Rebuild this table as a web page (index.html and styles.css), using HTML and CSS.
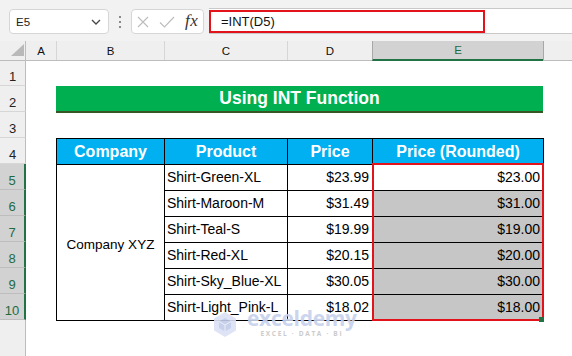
FILE: index.html
```html
<!DOCTYPE html>
<html>
<head>
<meta charset="utf-8">
<link rel="stylesheet" href="styles.css">
</head>
<body>
<div class="app">
  <div class="toolbar">
    <div class="namebox">
      <span class="ref">E5</span>
      <svg class="chev" width="10" height="6" viewBox="0 0 10 6"><path d="M1 1 L5 5 L9 1" fill="none" stroke="#444" stroke-width="1.3"/></svg>
    </div>
    <div class="grip"><i></i><i></i><i></i></div>
    <div class="fnbox">
      <svg class="ico-x" width="12" height="12" viewBox="0 0 12 12"><path d="M1 1 L11 11 M11 1 L1 11" stroke="#bcbcbc" stroke-width="1.1"/></svg>
      <svg class="ico-ok" width="16" height="12" viewBox="0 0 16 12"><path d="M1 6.5 L5.5 11 L15 1" fill="none" stroke="#bcbcbc" stroke-width="1.1"/></svg>
      <span class="fx">fx</span>
    </div>
    <div class="formula"><div class="formula-input">=INT(D5)</div></div>
  </div>

  <div class="sheet">
    <div class="corner"><svg width="26" height="20" viewBox="0 0 26 20"><path d="M24 3 L24 15 L11 15 Z" fill="#b9b9b9"/></svg></div>
    <div class="colheads">
      <div class="ch ch-a">A</div>
      <div class="ch ch-b">B</div>
      <div class="ch ch-c">C</div>
      <div class="ch ch-d">D</div>
      <div class="ch ch-e sel">E</div>
      <div class="ch ch-rest"></div>
    </div>
    <div class="rowheads">
      <div class="rh first">1</div>
      <div class="rh">2</div>
      <div class="rh">3</div>
      <div class="rh">4</div>
      <div class="rh sel">5</div>
      <div class="rh sel">6</div>
      <div class="rh sel">7</div>
      <div class="rh sel">8</div>
      <div class="rh sel">9</div>
      <div class="rh sel">10</div>
      <div class="rh rest"></div>
    </div>
    <div class="body">
      <div class="title">Using INT Function</div>
      <div class="tbl">
        <div class="th">Company</div>
        <div class="th">Product</div>
        <div class="th">Price</div>
        <div class="th">Price (Rounded)</div>
        <div class="td company">Company XYZ</div>
        <div class="td">Shirt-Green-XL</div>
        <div class="td num">$23.99</div>
        <div class="td num active">$23.00</div>
        <div class="td">Shirt-Maroon-M</div>
        <div class="td num">$31.49</div>
        <div class="td num fill">$31.00</div>
        <div class="td">Shirt-Teal-S</div>
        <div class="td num">$19.99</div>
        <div class="td num fill">$19.00</div>
        <div class="td">Shirt-Red-XL</div>
        <div class="td num">$20.15</div>
        <div class="td num fill">$20.00</div>
        <div class="td">Shirt-Sky_Blue-XL</div>
        <div class="td num">$30.05</div>
        <div class="td num fill">$30.00</div>
        <div class="td">Shirt-Light_Pink-L</div>
        <div class="td num">$18.02</div>
        <div class="td num fill">$18.00</div>
      </div>
    </div>
  </div>

  <div class="selection"></div>
  <div class="handle"></div>

  <div class="watermark">
    <svg class="wm-logo" width="24" height="27" viewBox="0 0 24 27">
      <path d="M12 1 L23 7.5 L23 19.5 L12 26 L1 19.5 L1 7.5 Z" fill="#dbe2f4"/>
      <path d="M12 7 L18 10.5 L18 17 L12 20.5 L6 17 L6 10.5 Z" fill="#c3cdea"/>
      <path d="M6 10.5 L12 14 L18 10.5 M12 14 L12 20.5" fill="none" stroke="#e9edf8" stroke-width="1"/>
    </svg>
    <div class="wm-text">
      <span class="wm-name">exceldemy</span>
      <span class="wm-sub">EXCEL · DATA · BI</span>
    </div>
  </div>
</div>
</body>
</html>
```

FILE: styles.css
```css
* { box-sizing: border-box; }

html, body {
  margin: 0;
  padding: 0;
  background: #ffffff;
}

.app {
  position: relative;
  width: 572px;
  height: 356px;
  overflow: hidden;
  font-family: "Liberation Sans", Arial, sans-serif;
  color: #000;
}

/* ---------- toolbar ---------- */
.toolbar {
  height: 41px;
  background: #f2f2f2;
  display: flex;
  align-items: flex-start;
  padding-top: 9px;
  padding-left: 9px;
}

.namebox {
  width: 100px;
  height: 25px;
  background: #fff;
  border: 1px solid #d6d6d6;
  border-radius: 4px;
  display: flex;
  align-items: center;
  justify-content: space-between;
  padding: 0 7px 0 6px;
}

.ref {
  font-size: 11.5px;
  color: #222;
}

.grip {
  width: 22px;
  height: 25px;
  display: flex;
  flex-direction: column;
  align-items: center;
  justify-content: center;
  gap: 3px;
}

.grip i {
  display: block;
  width: 2px;
  height: 2px;
  background: #8a8a8a;
}

.fnbox {
  width: 73px;
  height: 25px;
  background: #fff;
  border: 1px solid #d6d6d6;
  border-radius: 4px;
  display: flex;
  align-items: center;
  padding-left: 5px;
}

.ico-x { margin-right: 10px; }
.ico-ok { margin-right: 10px; }

.fx {
  font-family: "Liberation Serif", "Times New Roman", serif;
  font-style: italic;
  font-size: 17px;
  color: #333;
  letter-spacing: 0.5px;
  line-height: 1;
  margin-top: -2px;
}

.formula {
  flex: 1;
  margin-left: 5px;
  margin-top: -1px;
  height: 26px;
  background: #fff;
  border-top: 1px solid #c9c9c9;
  border-bottom: 1px solid #c9c9c9;
  padding-top: 1px;
}

.formula-input {
  width: 276px;
  height: 23px;
  border: 2px solid #e3131b;
  font-size: 13px;
  line-height: 19px;
  padding-left: 10px;
  color: #111;
}

/* ---------- sheet ---------- */
.sheet {
  display: grid;
  grid-template-columns: 26px 1fr;
  grid-template-rows: 20px 1fr;
  height: 315px;
}

.corner {
  background: #efefef;
  border-right: 1px solid #bdbdbd;
  border-bottom: 1px solid #bdbdbd;
}

.corner svg { display: block; }

.colheads {
  display: flex;
  background: #efefef;
  border-bottom: 1px solid #bdbdbd;
}

.ch {
  height: 19px;
  font-size: 11.5px;
  line-height: 20px;
  text-align: center;
  color: #111;
  border-left: 1px solid #d6d6d6;
}

.ch-a { width: 30px; border-left: none; }
.ch-b { width: 108px; }
.ch-c { width: 123px; }
.ch-d { width: 85px; }
.ch-e { width: 171px; }
.ch-rest { flex: 1; border-left-color: #a8a8a8; }

.ch.sel {
  background: #d2d2d2;
  color: #1e6b41;
  border-left-color: #a8a8a8;
  border-bottom: 2px solid #217346;
  height: 20px;
  line-height: 19px;
}

.rowheads {
  display: flex;
  flex-direction: column;
  background: #efefef;
}

.rh {
  height: 26px;
  flex: none;
  border-right: 1px solid #bdbdbd;
  border-bottom: 1px solid #d6d6d6;
  font-size: 13px;
  line-height: 15px;
  display: flex;
  align-items: flex-end;
  justify-content: center;
  padding-bottom: 1px;
  color: #222;
}

.rh.first { height: 25px; }

.rh.sel {
  background: #d2d2d2;
  color: #1e6b41;
  border-right: 2px solid #217346;
  border-bottom-color: #bdbdbd;
}

.rh.rest {
  flex: 1;
  border-bottom: none;
}

.body {
  display: grid;
  grid-template-columns: 30px 487px 1fr;
  grid-template-rows: 25px 26px 26px auto;
  align-items: start;
}

.title {
  grid-row: 2;
  grid-column: 2;
  height: 27px;
  background: #00b050;
  border-bottom: 2px solid #375623;
  color: #fff;
  font-weight: bold;
  font-size: 17.5px;
  line-height: 25px;
  text-align: center;
}

.tbl {
  grid-row: 4;
  grid-column: 2;
  width: 488px;
  display: grid;
  grid-template-columns: 108px 123px 85px 171px;
  grid-auto-rows: 26px;
  border-left: 1px solid #000;
  border-top: 1px solid #000;
}

.th, .td {
  border-right: 1px solid #000;
  border-bottom: 1px solid #000;
  line-height: 25px;
  white-space: nowrap;
  overflow: hidden;
}

.th {
  background: #00b0f0;
  color: #fff;
  font-weight: bold;
  font-size: 16px;
  text-align: center;
}

.td {
  font-size: 14px;
  padding: 0 2px;
  color: #000;
}

.td.num {
  text-align: right;
  padding-right: 3px;
}

.td.fill { background: #c6c6c6; }

.td.company {
  grid-row: 2 / 8;
  grid-column: 1;
  display: flex;
  align-items: center;
  justify-content: center;
  padding-top: 3px;
  font-size: 13.5px;
}

/* ---------- overlays ---------- */
.selection {
  position: absolute;
  left: 372px;
  top: 163px;
  width: 172px;
  height: 158px;
  border: 2px solid #e3131b;
}

.handle {
  position: absolute;
  left: 539px;
  top: 317px;
  width: 5px;
  height: 5px;
  background: #217346;
}

.watermark {
  position: absolute;
  left: 213px;
  top: 311px;
  display: flex;
  align-items: flex-start;
  gap: 10px;
  opacity: 0.9;
}

.wm-logo { display: block; }

.wm-text {
  display: flex;
  flex-direction: column;
  align-items: center;
  margin-top: -4px;
}

.wm-name {
  font-family: "Open Sans", "Noto Sans", sans-serif;
  font-weight: bold;
  font-size: 21px;
  line-height: 22px;
  color: #c7d1ed;
  letter-spacing: -0.3px;
}

.wm-sub {
  font-family: "Open Sans", "Noto Sans", sans-serif;
  font-size: 6.5px;
  font-weight: bold;
  letter-spacing: 1.7px;
  color: #c6c6c6;
  line-height: 8px;
  margin-top: 1px;
}
```
